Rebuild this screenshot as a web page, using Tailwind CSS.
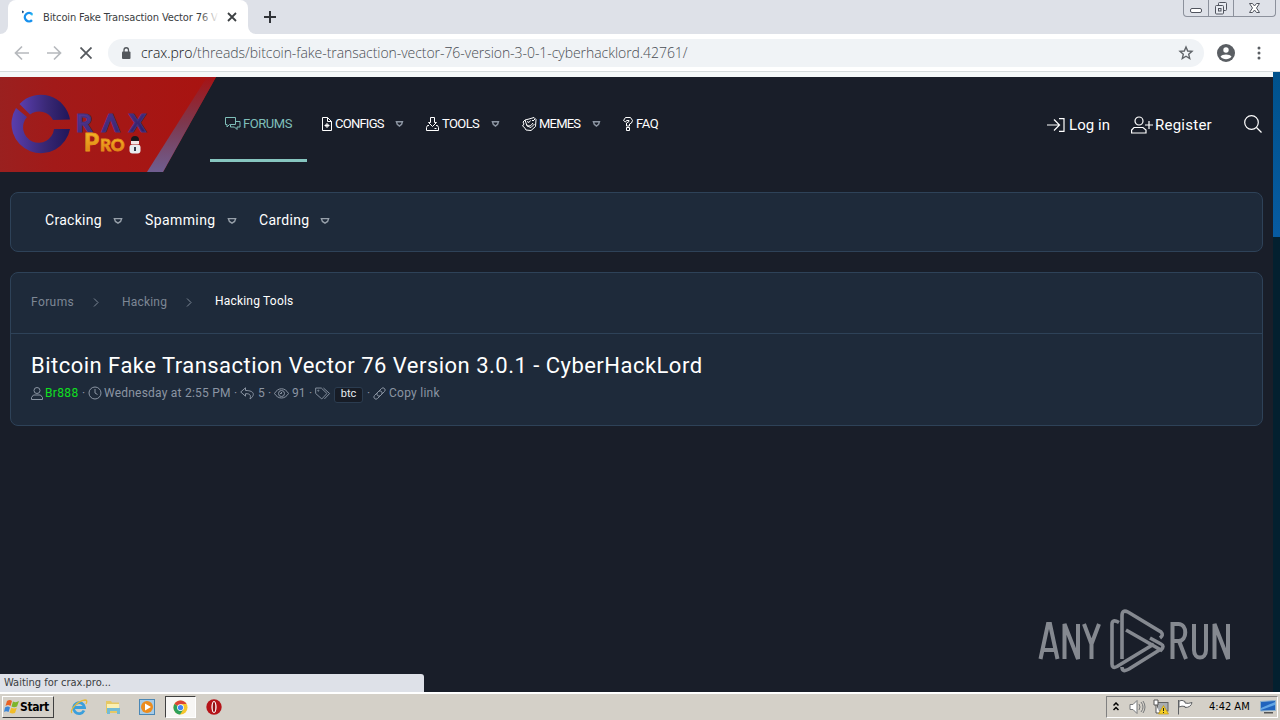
<!DOCTYPE html>
<html lang="en">
<head>
  <meta charset="UTF-8">
  <title>Bitcoin Fake Transaction Vector 76 Version 3.0.1 - CyberHackLord</title>
  <script src="https://cdn.jsdelivr.net/npm/@tailwindcss/browser@4"></script>
</head>
<body class="w-[1280px] h-[720px] overflow-hidden flex flex-col bg-[#191e29] font-['Roboto',sans-serif] whitespace-nowrap">

  <!-- Tab strip -->
  <div class="relative flex h-[34px] shrink-0 bg-[#dee1e8] font-['DejaVu_Sans_Condensed','DejaVu_Sans',sans-serif]">
    <div class="w-2 bg-white"><div class="h-full rounded-br-lg bg-[#dee1e8]"></div></div>
    <div class="flex items-center w-[240px] rounded-t-lg bg-white pl-3">
      <svg class="w-4 h-4 mr-[7px]" viewBox="0 0 16 16" fill="none">
        <path d="M12 5.2A4.2 4.2 0 1 0 12 11.2" stroke="#1690ee" stroke-width="2.4"/>
        <path d="M2 1.5l2 1-1 2-1-1z" fill="#174a86"/><path d="M10 4l3 1-1 2z" fill="#25bdf0"/>
      </svg>
      <div class="relative w-[176px] pt-[2px] overflow-hidden text-[11px] tracking-[-0.12px] text-[#3a3d41]">Bitcoin Fake Transaction Vector 76 V
        <div class="absolute inset-y-0 right-0 w-4 bg-linear-to-r from-white/20 to-white"></div>
      </div>
      <svg class="w-[10px] h-[10px] ml-2" viewBox="0 0 10 10" stroke="#3c4043" stroke-width="1.8"><path d="M1 1l8 8M9 1L1 9"/></svg>
    </div>
    <div class="w-2 bg-white"><div class="h-full rounded-bl-lg bg-[#dee1e8]"></div></div>
    <svg class="w-3 h-3 mt-[11px] ml-2" viewBox="0 0 12 12" stroke="#303338" stroke-width="2"><path d="M6 0v12M0 6h12"/></svg>
    <!-- Window buttons -->
    <div class="absolute right-1 top-0 flex w-[93px] h-[17px] border border-t-0 border-[#8c919c] rounded-b-[4px]">
      <div class="w-[25px] border-r border-[#8c919c]"><svg class="w-6 h-4" viewBox="0 0 24 16" fill="#fff" stroke="#50545e"><rect x="6.5" y="8.500" width="11" height="4" rx="1.500"/></svg></div>
      <div class="w-[25px] border-r border-[#8c919c]"><svg class="w-6 h-4" viewBox="0 0 24 16" fill="#e8ebf1" stroke="#50545e"><rect x="9.500" y="2.500" width="8" height="8" rx="1"/><rect x="6.500" y="5.500" width="8" height="8.500" rx="1"/><rect x="9.500" y="8.500" width="2.500" height="2.500"/></svg></div>
      <div class="w-[41px]"><svg class="w-[41px] h-4" viewBox="0 0 41 16" fill="#fff" stroke="#50545e"><path d="M15.500 3.500h3l2 2.500 2-2.500h3L22.500 8l3 4.500h-3l-2-2.500-2 2.500h-3l3-4.500z"/></svg></div>
    </div>
  </div>

  <!-- Toolbar -->
  <div class="flex items-center h-[37px] shrink-0 bg-white text-[#5f6368]">
    <svg class="w-4 h-4 ml-[14px]" viewBox="0 0 16 16" fill="none" stroke="#b6b9bd" stroke-width="1.700"><path d="M15 8H2M8 1.500L1.500 8 8 14.500"/></svg>
    <svg class="w-4 h-4 ml-4" viewBox="0 0 16 16" fill="none" stroke="#b6b9bd" stroke-width="1.700"><path d="M1 8h13M8 1.500L14.500 8 8 14.500"/></svg>
    <svg class="w-3 h-3 ml-[18px]" viewBox="0 0 12 12" stroke="#55595e" stroke-width="1.800"><path d="M.5.500l11 11M11.500.500l-11 11"/></svg>
    <div class="flex items-center w-[1096px] h-7 ml-4 pl-[13px] rounded-full bg-[#f0f3f6]">
      <svg class="w-[10px] h-3 mr-[10px]" viewBox="0 0 10 12"><rect x="1" y="4.500" width="8.500" height="7.500" rx="1" fill="#53575c"/><path d="M3 5V3a2.200 2.200 0 0 1 4.500 0v2" fill="none" stroke="#53575c" stroke-width="1.300"/></svg>
      <div class="w-[1037px] pb-px font-['Open_Sans',sans-serif] text-[14px] font-light tracking-[-0.055px] text-[#4a4e54]"><span class="text-[#101114]">crax.pro</span>/threads/bitcoin-fake-transaction-vector-76-version-3-0-1-cyberhacklord.42761/</div>
      <svg class="w-4 h-4" viewBox="0 0 16 16" fill="none" stroke="#5f6368" stroke-width="1.400"><path d="M8 2l1.700 4 4.300.4-3.300 2.900 1 4.200L8 11.200l-3.700 2.300 1-4.200L2 6.400 6.300 6z"/></svg>
    </div>
    <svg class="w-[18px] h-[18px] ml-[13px]" viewBox="0 0 18 18"><circle cx="9" cy="9" r="9" fill="#5a5e63"/><circle cx="9" cy="6" r="2.700" fill="#fff"/><path d="M3.500 12.500C5 9.800 13 9.800 14.500 12.500 12 16 6 16 3.500 12.500z" fill="#fff"/></svg>
    <svg class="w-1 h-[14px] ml-[22px]" viewBox="0 0 4 14" fill="#5a5e63"><circle cx="2" cy="2" r="1.500"/><circle cx="2" cy="7" r="1.500"/><circle cx="2" cy="12" r="1.500"/></svg>
  </div>
  <div class="flex h-[6px] shrink-0 border-t border-[#d5dbdc] bg-[#f4f8f8]"></div>

  <!-- Page -->
  <div class="relative flex h-[615px] shrink-0">
    <main class="w-[1273px]">
      <header class="flex h-[95px]">
        <svg class="w-[210px] h-[95px] overflow-visible" viewBox="0 0 210 95">
          <defs>
            <linearGradient id="red" x1="0" y1="0" x2="1" y2="0"><stop stop-color="#9a201f"/><stop offset=".25" stop-color="#a21a19"/><stop offset="1" stop-color="#a91310"/></linearGradient>
            <linearGradient id="edge" x1="0" y1="0" x2="0" y2="1"><stop stop-color="#a51315"/><stop offset=".5" stop-color="#7c3950"/><stop offset="1" stop-color="#6f5e90"/></linearGradient>
            <linearGradient id="ring" x1="0" y1=".5" x2="1" y2=".5"><stop stop-color="#5a3eae"/><stop offset=".55" stop-color="#392875"/><stop offset="1" stop-color="#211659"/></linearGradient>
            <linearGradient id="letters" x1="0" y1="0" x2="1" y2="1"><stop stop-color="#5b3b9c"/><stop offset="1" stop-color="#2c1c60"/></linearGradient>
            <linearGradient id="gold" x1="0" y1="0" x2="0" y2="1"><stop stop-color="#f8c52b"/><stop offset="1" stop-color="#dc7611"/></linearGradient>
          </defs>
          <path d="M0 0H216L163 95H0z" fill="url(#red)"/>
          <path d="M216 0h-9L147 95h16z" fill="url(#edge)"/>
          <path d="M70 42.500A29.500 29.500 0 0 0 19.500 27L30 37.500A15.500 15.500 0 0 1 53 43z" fill="url(#ring)"/>
          <path d="M16 31A29.500 29.500 0 1 0 70 52H54A15.500 15.500 0 1 1 27 40z" fill="url(#ring)"/>
          <text y="55" font-family="Lato" font-weight="900" font-size="25" fill="url(#letters)" stroke="#43317f" stroke-width="1.2"><tspan x="76">R</tspan><tspan x="102">Λ</tspan><tspan x="129">X</tspan></text>
          <text x="84" y="74" font-family="Lato" font-weight="900" font-size="24" fill="url(#gold)" stroke="#e79a1c" stroke-width=".8">P</text>
          <text x="100" y="74" font-family="Lato" font-weight="900" font-size="17" fill="url(#gold)" stroke="#e38c1a" stroke-width=".8">RO</text>
          <circle cx="135" cy="63" r="4" fill="#18191d"/><path d="M131 64h8v3h-8z" fill="#f2e4e4"/><rect x="129.500" y="67.500" width="11" height="9" rx="3" fill="#e7eaed"/><rect x="134" y="70" width="2" height="4" fill="#303848"/>
        </svg>

        <nav class="flex h-[85px] text-[13px] text-white">
          <a class="flex items-center w-[97px] pl-[15px] pt-3 pb-[1px] border-b-3 border-[#86c5bf] text-[#7fbfb9]">
            <svg class="w-4 h-4 mr-[2px]" viewBox="0 0 16 16" fill="none" stroke="currentColor"><path d="M5.500 8.500h-1L2 11V8.500H.500v-7h10v7H5.500V11h4l2.500 2.500V11h3V5.500h-4.500"/></svg>
            <span class="w-[50px] tracking-[-0.45px]">FORUMS</span>
          </a>
          <a class="flex items-center w-[104px] pl-[14px] pt-3 pb-[4px]">
            <svg class="w-3 h-[14px] mr-[2px]" viewBox="0 0 12 14" fill="none" stroke="currentColor"><path d="M1.500.500h5l4 4v9h-9zM6.500.500v4h4M6 6v5M3.500 8.500h5M4.500 7l3 3M7.500 7l-3 3"/></svg>
            <span class="w-[60px] tracking-[-0.75px]">CONFIGS</span>
            <svg class="w-2 h-[6px] overflow-visible" viewBox="0 0 8 7" fill="none" stroke="#8d96a3" stroke-width="1.700"><path d="M1 .8h7L7 4 4.500 6 2 4z"/></svg>
          </a>
          <a class="flex items-center w-[96px] pl-[15px] pt-3 pb-[4px]">
            <svg class="w-[13px] h-[14px] mr-[3px]" viewBox="0 0 13 14" fill="none" stroke="currentColor"><path d="M4.500.500h4v5h2l-4 4-4-4h2zM3 8.500H1.500l-1 2v3h12v-3l-1-2H10M8.500 11.500h2"/></svg>
            <span class="w-[49px] tracking-[-0.6px]">TOOLS</span>
            <svg class="w-2 h-[6px] overflow-visible" viewBox="0 0 8 7" fill="none" stroke="#8d96a3" stroke-width="1.700"><path d="M1 .8h7L7 4 4.500 6 2 4z"/></svg>
          </a>
          <a class="flex items-center w-[101px] pl-[15px] pt-3 pb-[4px]">
            <svg class="w-[15px] h-[14px] mr-[2px]" viewBox="0 0 15 14" fill="none" stroke="currentColor"><path d="M3 3L1 5l1 2-1.500 2 2 1.500L4 13l5 .5 4.500-4 .5-7-2-2-5 1.500L3 3l2 6 4 1.500L12.500 7M5 4.500l2 1 1.500-2M10 3l1 1 2-2M5 8c2 1.500 4 1 6-2"/></svg>
            <span class="w-[53px] tracking-[-0.8px]">MEMES</span>
            <svg class="w-2 h-[6px] overflow-visible" viewBox="0 0 8 7" fill="none" stroke="#8d96a3" stroke-width="1.700"><path d="M1 .8h7L7 4 4.500 6 2 4z"/></svg>
          </a>
          <a class="flex items-center pl-[15px] pt-3 pb-[4px]">
            <svg class="w-[10px] h-[14px] mr-[3px]" viewBox="0 0 10 14" fill="none" stroke="currentColor"><path d="M.500 3.500l2-3h5l2 3-1 2.500L6.500 7v2h-3V6L6 4.500V3.500H3.500l-1 1.500zM3.500 10.500h3v3h-3z"/></svg>
            <span class="tracking-[-0.4px]">FAQ</span>
          </a>
        </nav>

        <div class="flex items-center h-[95px] ml-auto mr-[11px] text-[15px] text-white">
          <svg class="w-[18px] h-[14px] mr-1" viewBox="0 0 18 14" fill="none" stroke="currentColor" stroke-width="1.200"><path d="M0 7h12M7 1.500L12.500 7 7 12.500M12 .7h5v12.600h-5"/></svg>
          <span class="w-[62px] pt-px tracking-[0.05px]">Log in</span>
          <svg class="w-[22px] h-[18px] mr-[2px]" viewBox="0 0 22 18" fill="none" stroke="currentColor" stroke-width="1.200"><circle cx="8" cy="5" r="4"/><path d="M.6 17v-3l2.400-2.500h9L15 14v3zM18 5v8M14 9h8"/></svg>
          <span class="w-[89px] pt-px tracking-[0.25px]">Register</span>
          <svg class="w-[18px] h-[18px] -mt-[2px]" viewBox="0 0 18 18" fill="none" stroke="currentColor" stroke-width="1.200"><circle cx="7.500" cy="7.500" r="6.800"/><path d="M12.500 12.500L17.500 17.500"/></svg>
        </div>
      </header>

      <!-- Sub navigation -->
      <div class="flex items-center w-[1253px] h-[60px] mt-5 ml-[10px] pl-[34px] pb-[3px] rounded-[8px] border border-[#2e4258] bg-[#1e2a3a] text-[14px] text-white">
        <span class="w-[68px] tracking-[0.3px]">Cracking</span>
        <svg class="w-[10px] h-[6px] mr-[22px]" viewBox="0 0 10 7" fill="none" stroke="#97a0aa" stroke-width="1.600"><path d="M.8.800h8.400L8 4 5 6 2 4z"/></svg>
        <span class="w-[82px] tracking-[0.4px]">Spamming</span>
        <svg class="w-[10px] h-[6px] mr-[22px]" viewBox="0 0 10 7" fill="none" stroke="#97a0aa" stroke-width="1.600"><path d="M.8.800h8.400L8 4 5 6 2 4z"/></svg>
        <span class="w-[61px] tracking-[0.3px]">Carding</span>
        <svg class="w-[10px] h-[6px]" viewBox="0 0 10 7" fill="none" stroke="#97a0aa" stroke-width="1.600"><path d="M.8.800h8.400L8 4 5 6 2 4z"/></svg>
      </div>

      <!-- Thread head -->
      <section class="w-[1253px] h-[154px] mt-5 ml-[10px] rounded-[8px] border border-[#2e4258] bg-[#1e2a3a]">
        <div class="flex items-center h-[61px] pl-5 pb-[2px] border-b border-[#2e4258] text-[12px] text-[#7d8795]">
          <span class="w-[62px] tracking-[0.4px]">Forums</span>
          <svg class="w-[6px] h-[9px] mr-[23px]" viewBox="0 0 6 9" fill="none" stroke="#7d8795"><path d="M1 .500l4 4-4 4"/></svg>
          <span class="w-[64px] tracking-[0.2px]">Hacking</span>
          <svg class="w-[6px] h-[9px] mr-[23px]" viewBox="0 0 6 9" fill="none" stroke="#7d8795"><path d="M1 .500l4 4-4 4"/></svg>
          <span class="pb-[2px] tracking-[0.2px] text-white">Hacking Tools</span>
        </div>
        <h1 class="mt-[18px] ml-5 text-[22px] leading-[28px] tracking-[0.48px] text-white">Bitcoin Fake Transaction Vector 76 Version 3.0.1 - CyberHackLord</h1>
        <div class="flex items-center h-[18px] mt-[4px] ml-5 text-[12px] text-[#8b95a3]">
          <svg class="w-3 h-[13px] mr-[2px]" viewBox="0 0 12 13" fill="none" stroke="currentColor"><circle cx="6" cy="3.500" r="3"/><path d="M.500 12.500v-2l2-2.500h7l2 2.500v2z"/></svg>
          <span class="w-[38px] tracking-[0.35px] text-[#10e020]">Br888</span>
          <span class="w-[6px] -ml-px">·</span>
          <svg class="w-[14px] h-[14px] mr-[2px]" viewBox="0 0 14 14" fill="none" stroke="currentColor"><circle cx="7" cy="7" r="6"/><path d="M7 3v4l2.500 1.500"/></svg>
          <span class="w-[130px] tracking-[0.22px]">Wednesday at 2:55 PM</span>
          <span class="w-[6px]">·</span>
          <svg class="w-[15px] h-[13px] mr-[3px]" viewBox="0 0 15 13" fill="none" stroke="currentColor"><path d="M5.500.800L.700 5l4.800 4.200V6.700c5-.2 5.500 1.800 4.500 5.300 5-3.500 5-8.500-4.500-8.500z"/></svg>
          <span class="w-[10px]">5</span>
          <span class="w-[6px]">·</span>
          <svg class="w-[15px] h-[11px] mr-[3px]" viewBox="0 0 15 11" fill="none" stroke="currentColor"><path d="M.500 5.500C4-.8 11-.8 14.500 5.500 11 11.500 4 11.500.500 5.500z"/><circle cx="7.500" cy="5.500" r="3"/><path d="M7.500 4v1.500H6"/></svg>
          <span class="w-[17px]">91</span>
          <span class="w-[6px]">·</span>
          <svg class="w-[16px] h-[13px] mr-[3px]" viewBox="0 0 17 13" fill="none" stroke="currentColor"><path d="M.700.700h6l6 5.800-5.500 5.800L.700 6.500zM9 .700l6.500 5.800-5.500 5.800"/><circle cx="3.500" cy="3.500" r=".6"/></svg>
          <span class="flex items-center justify-center w-[29px] h-[16px] mt-[3px] mr-1 rounded-[3px] border border-[#2b3c50] bg-[#171c26] pb-px text-[11px] text-[#e8ecf1]">btc</span>
          <span class="w-[6px]">·</span>
          <svg class="w-[13px] h-[13px] mr-[3px]" viewBox="0 0 13 13" fill="none" stroke="currentColor"><path d="M4.500 5.500l4-4q1.500-1.500 3 0t0 3l-4 4q-1.500 1.500-3 0t0-3M8.500 7.500l-4 4q-1.500 1.500-3 0t0-3l4-4q1.500-1.500 3 0t0 3"/></svg>
          <span class="tracking-[0.25px]">Copy link</span>
        </div>
      </section>
    </main>
    <!-- Desktop visible at the right edge -->
    <div class="w-[7px] h-[620px] -mt-[5px] bg-[#03202f]"><div class="h-[165px] bg-linear-to-b from-[#00528c] to-[#075ba1]"></div></div>

    <!-- Watermark -->
    <svg class="absolute left-[1036px] top-[530px] w-[200px] h-[68px]" viewBox="0 0 200 68" fill="none" stroke="#858990" stroke-width="4">
      <path d="M4.500 52L12 17h2l7.500 35M7 43h12M28.500 52V17L42 52V17M48 17l7.500 20L63 17M55.500 37v15"/>
      <path d="M136.500 52V17h6c9 0 9 17 0 17h-6M143 34l7 18M158 17v26c0 10 12 10 12 0V17M178.500 52V17L192 52V17"/>
      <path d="M83 15.500q-7-4-7 2V57q0 5 5 2.500L118 37M86 52V9q0-7 6-4l33 20q3 3-1 6M90 23l35 20q4-4 0-6l-11-6M86 60q0 6 7 2l32-20" stroke-width="3.600"/>
    </svg>

    <!-- Status bubble -->
    <div class="absolute left-0 bottom-0 flex items-center w-[424px] h-[18px] pt-px pl-1 rounded-tr-[3px] bg-[#dee1e8] font-['DejaVu_Sans_Condensed','DejaVu_Sans',sans-serif] text-[11px] text-[#3a3d41]">Waiting for crax.pro...</div>
  </div>

  <!-- Taskbar -->
  <footer class="flex items-center h-7 shrink-0 border-t-2 border-white bg-[#d4d0c8] font-['DejaVu_Sans_Condensed','DejaVu_Sans',sans-serif] text-black">
    <div class="flex items-center w-[52px] h-[22px] ml-[2px] pl-px border border-white border-r-[#404040] border-b-[#404040] text-[12px] font-bold tracking-[-0.4px]">
      <svg class="w-4 h-4 shrink-0" viewBox="0 0 16 16"><path d="M3 2q3-2 5 0L6.500 7Q4 5 1.500 7z" fill="#e96224"/><path d="M9 2.500q3 1.500 6-.5L13 7.500q-3 1.500-5.500 0z" fill="#7db52c"/><path d="M1 8.500q3-2 5 0L4.500 13Q2 11.500 0 13z" fill="#3b86d7"/><path d="M7.300 8.800q3 1.500 5.500 0L11 14q-3 1-5.500-.5z" fill="#f2bd28"/></svg>
      Start
    </div>
    <svg class="w-[18px] h-[18px] ml-[16px]" viewBox="0 0 18 18" fill="none"><path d="M14 12.500A5.500 5.500 0 1 1 14.500 9.500H5" stroke="#3a9fdc" stroke-width="2.800"/><path d="M2 15C-1 13 7 3 15 2q3 0 1 4" stroke="#e5b939" stroke-width="1.300"/></svg>
    <svg class="w-4 h-4 ml-[17px]" viewBox="0 0 16 16"><path d="M1 2h5l1 1.500h7V14H1z" fill="#e6c865"/><path d="M2 5h12v4H2z" fill="#fbf0b2"/><path d="M2 9h13v6h-3v-3H5v3H2z" fill="#73bbd5"/></svg>
    <svg class="w-4 h-4 ml-[18px]" viewBox="0 0 16 16"><rect x=".500" y=".500" width="15" height="15" fill="#a6cbe7" stroke="#4a87b5"/><circle cx="8" cy="8" r="6" fill="#ec8c1e"/><path d="M6 4.500l6 3.500-6 3.500z" fill="#fff"/></svg>
    <div class="flex items-center justify-center w-[31px] h-[22px] ml-[10px] border border-t-[#404040] border-l-[#404040] border-white bg-[#f7f6f4]">
      <svg class="w-[15px] h-[15px]" viewBox="0 0 16 16"><circle cx="8" cy="8" r="7.500" fill="#f6c62d"/><path d="M8 8L1.500 4.300A7.500 7.500 0 0 1 14.500 4.300H8z" fill="#db4437"/><path d="M1.500 4.300A7.500 7.500 0 0 0 7.500 15.500L11 10z" fill="#2da05a"/><circle cx="8" cy="8" r="3.600" fill="#fff"/><circle cx="8" cy="8" r="2.800" fill="#4285f4"/></svg>
    </div>
    <svg class="w-4 h-4 ml-[10px]" viewBox="0 0 16 16"><circle cx="8" cy="8" r="7.700" fill="#b51318"/><ellipse cx="8" cy="8" rx="2.600" ry="6" fill="#fff"/><ellipse cx="8" cy="8" rx="1.300" ry="5" fill="#941014"/></svg>

    <div class="flex items-center w-[172px] h-[22px] ml-auto mr-[2px] pl-[6px] border border-t-[#808080] border-l-[#808080] border-white text-[11px]">
      <svg class="w-[6px] h-[9px] mb-[2px] mr-[10px]" viewBox="0 0 6 9" fill="none" stroke="#000" stroke-width="1.500"><path d="M.500 3.500L3 1l2.500 2.500M.500 8L3 5.500 5.500 8"/></svg>
      <svg class="w-[17px] h-4 mr-[7px]" viewBox="0 0 17 16" stroke="#77797b" fill="none"><path d="M1 5.500h3l4-4v13l-4-4H1z" fill="#fff"/><path d="M10 5q2 3 0 6M12 3q4 5 0 10M14 2q4 6 0 12"/></svg>
      <svg class="w-4 h-4 mr-[8px]" viewBox="0 0 16 16"><rect x="4.500" y="3.500" width="10.500" height="8.500" fill="#a9adb0" stroke="#646464"/><path d="M1 1h4v5H1zM3 6v8h4" stroke="#555" fill="#fff"/><path d="M10.500 6.500L15.500 15h-10z" fill="#f5cf25" stroke="#bd9411" stroke-width=".700"/><path d="M10.500 9v3M10.500 13v1" stroke="#222"/></svg>
      <svg class="w-4 h-4 mr-[16px]" viewBox="0 0 16 16" stroke="#5f6164" fill="#fff"><path d="M1.500 1v14.500M2 2q3-1.500 6 .500v1.500q3 1 7-.500-1 5-7 5V7.500Q5 6.500 2 8z"/></svg>
      <span class="w-[51px]">4:42 AM</span>
      <svg class="w-4 h-[14px]" viewBox="0 0 16 14"><path d="M.500 1.500l15-1v10l-15 .5z" fill="#2064bd" stroke="#8eb2cf"/><path d="M1 8l14-6v3L1 10z" fill="#63a7e5"/><path d="M4 12h9v1.500H4z" fill="#555"/></svg>
    </div>
  </footer>
</body>
</html>
